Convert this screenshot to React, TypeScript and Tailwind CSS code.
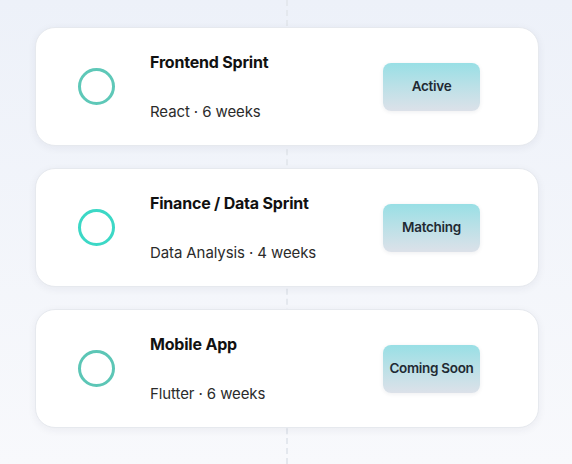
import React from "react";

const items = [
  { title: "Frontend Sprint", sub: "React · 6 weeks", status: "Active", ring: "border-[#5ec8b8]" },
  { title: "Finance / Data Sprint", sub: "Data Analysis · 4 weeks", status: "Matching", ring: "border-[#3cd8c6]" },
  { title: "Mobile App", sub: "Flutter · 6 weeks", status: "Coming Soon", ring: "border-[#5cc6b6]" },
];

export default function App() {
  return (
    <div
      className="relative w-[572px] h-[464px] overflow-hidden bg-gradient-to-b from-[#edf1f9] to-[#f8f9fc] pl-[35px] pt-[27px]"
      style={{ fontFamily: "Inter, 'Noto Sans', sans-serif" }}
    >
      <div className="absolute left-[286px] top-0 bottom-0 w-0 border-l-2 border-dashed border-[#e4e8ee]" />
      <div className="relative w-[504px] flex flex-col gap-[22px]">
        {items.map((it) => (
          <div
            key={it.title}
            className="flex items-center h-[119px] rounded-[20px] bg-white border border-[#e6e9ee] shadow-[0_2px_8px_rgba(30,40,70,0.06)]"
          >
            <div className="ml-[42px] w-[37px] h-[37px] shrink-0 flex items-center justify-center">
              <div className={`w-[37px] h-[37px] rounded-full border-[3px] ${it.ring}`} />
            </div>
            <div className="ml-[35px] flex-1 flex flex-col gap-[30px]">
              <div className="text-[16px] leading-[20px] font-bold text-[#111] tracking-[-0.2px]">{it.title}</div>
              <div className="text-[15px] leading-[20px] text-[#2b2b2b] tracking-[-0.1px]">{it.sub}</div>
            </div>
            <div className="mr-[58px] w-[97px] h-[48px] rounded-[8px] bg-gradient-to-b from-[#98dfe5] to-[#dce1e9] shadow-[0_1px_4px_rgba(30,40,70,0.08)] flex items-center justify-center">
              <span className="text-[13.5px] font-semibold text-[#1f2a33] tracking-[-0.3px] whitespace-nowrap">{it.status}</span>
            </div>
          </div>
        ))}
      </div>
    </div>
  );
}
